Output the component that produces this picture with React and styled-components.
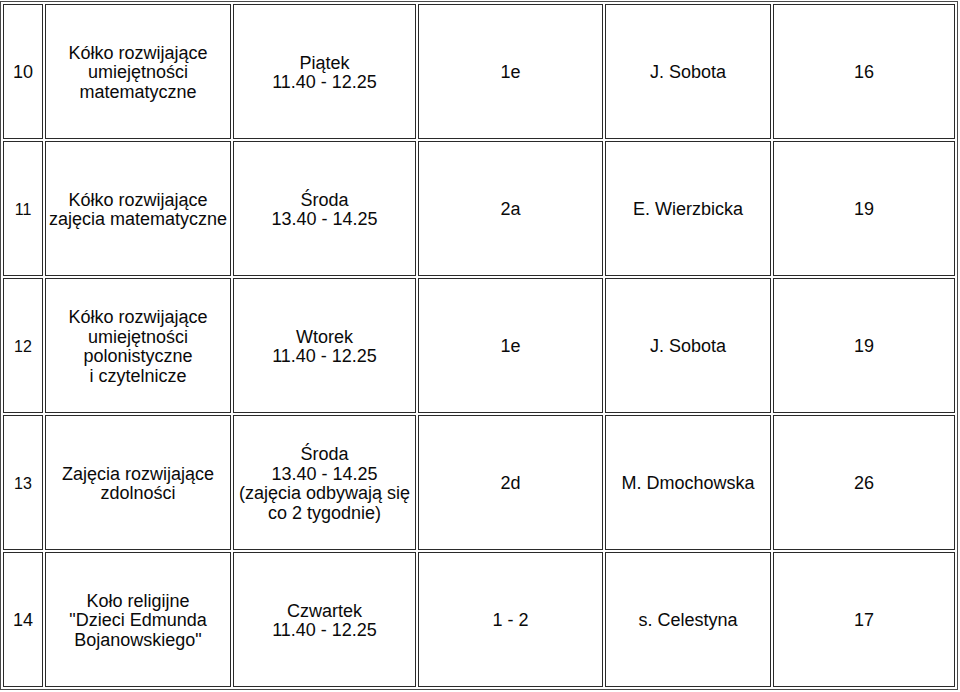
import React from "react";
import styled, { createGlobalStyle } from "styled-components";

const rows = [
  {
    no: "10",
    name: ["Kółko rozwijające", "umiejętności", "matematyczne"],
    time: ["Piątek", "11.40 - 12.25"],
    cls: "1e",
    teacher: "J. Sobota",
    room: "16",
  },
  {
    no: "11",
    small: true,
    name: ["Kółko rozwijające", "zajęcia matematyczne"],
    time: ["Środa", "13.40 - 14.25"],
    cls: "2a",
    teacher: "E. Wierzbicka",
    room: "19",
  },
  {
    no: "12",
    small: true,
    name: ["Kółko rozwijające", "umiejętności", "polonistyczne", "i czytelnicze"],
    time: ["Wtorek", "11.40 - 12.25"],
    cls: "1e",
    teacher: "J. Sobota",
    room: "19",
  },
  {
    no: "13",
    small: true,
    name: ["Zajęcia rozwijające", "zdolności"],
    time: ["Środa", "13.40 - 14.25", "(zajęcia odbywają się", "co 2 tygodnie)"],
    cls: "2d",
    teacher: "M. Dmochowska",
    room: "26",
  },
  {
    no: "14",
    name: ["Koło religijne", "\"Dzieci Edmunda", "Bojanowskiego\""],
    time: ["Czwartek", "11.40 - 12.25"],
    cls: "1 - 2",
    teacher: "s. Celestyna",
    room: "17",
  },
];

const widths = [40, 186, 183, 185, 166, 182];

const GlobalStyle = createGlobalStyle`
  html, body {
    margin: 0;
    padding: 0;
    background: #fff;
  }
  body {
    font-family: "Liberation Sans", Arial, sans-serif;
    color: #0a0a0a;
  }
`;

const Table = styled.table`
  margin-top: 1px;
  width: 958px;
  table-layout: fixed;
  border-collapse: separate;
  border-spacing: 2px;
  border: 1px solid #4a4a4a;
`;

const Cell = styled.td`
  box-sizing: border-box;
  height: 135px;
  padding: 3px 0 0;
  border: 1px solid #2a2a2a;
  text-align: center;
  vertical-align: middle;
  font-size: ${(p) => (p.$small ? "16px" : "18px")};
  line-height: 19.5px;
`;

const Lines = ({ items }) =>
  items.map((t, i) => (
    <React.Fragment key={i}>
      {i > 0 && <br />}
      {t}
    </React.Fragment>
  ));

const App = () => {
  return (
    <>
      <GlobalStyle />
      <Table>
        <colgroup>
          {widths.map((w, i) => (
            <col key={i} style={{ width: w }} />
          ))}
        </colgroup>
        <tbody>
          {rows.map((r) => (
            <tr key={r.no}>
              <Cell $small={r.small}>{r.no}</Cell>
              <Cell>
                <Lines items={r.name} />
              </Cell>
              <Cell>
                <Lines items={r.time} />
              </Cell>
              <Cell>{r.cls}</Cell>
              <Cell>{r.teacher}</Cell>
              <Cell>{r.room}</Cell>
            </tr>
          ))}
        </tbody>
      </Table>
    </>
  );
};

export default App;
